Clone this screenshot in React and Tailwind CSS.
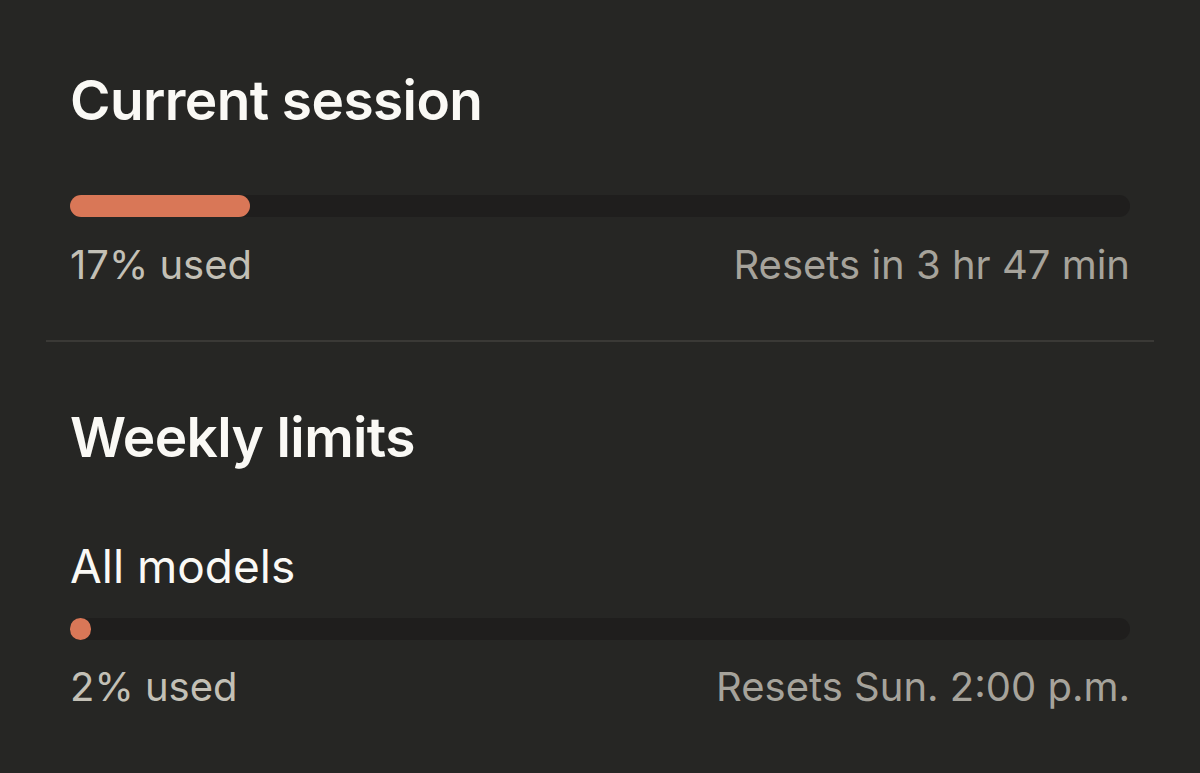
const font = { fontFamily: "Inter, 'Noto Sans', sans-serif" };

function UsageBar({ percent }) {
  return (
    <div className="h-[22px] w-full rounded-full bg-[#1f1e1d]">
      <div
        className="h-full rounded-full bg-[#d97757]"
        style={{ width: `${Math.max(percent, 2)}%` }}
      />
    </div>
  );
}

function UsageFooter({ used, resets, className }) {
  return (
    <div className={`flex items-center justify-between text-[40px] leading-none text-[#a6a39b] ${className}`}>
      <span className="text-[#c3c0b6]">{used}</span>
      <span>{resets}</span>
    </div>
  );
}

export default function App() {
  return (
    <div className="h-[773px] w-[1200px] overflow-hidden bg-[#262624] text-[#faf9f5]" style={font}>
      <div className="w-[1130px] pl-[70px] pt-[73px]">
        <h2 className="text-[55px] font-semibold leading-none tracking-[-0.6px]">Current session</h2>
        <div className="mt-[67px]">
          <UsageBar percent={17} />
        </div>
        <UsageFooter className="mt-[28px]" used="17% used" resets="Resets in 3 hr 47 min" />
      </div>
      <div className="mx-[46px] mt-[55px] h-[2px] bg-[#3a3936]" />
      <div className="w-[1130px] pl-[70px] pt-[68px]">
        <h2 className="text-[55px] font-semibold leading-none tracking-[-0.6px]">Weekly limits</h2>
        <div className="mt-[78px] text-[46px] leading-none text-[#faf9f5]">All models</div>
        <div className="mt-[29px]">
          <UsageBar percent={2} />
        </div>
        <UsageFooter className="mt-[27px]" used="2% used" resets="Resets Sun. 2:00 p.m." />
      </div>
    </div>
  );
}
